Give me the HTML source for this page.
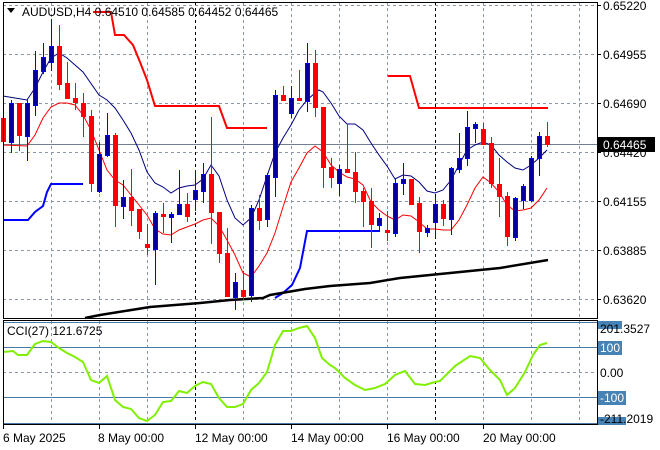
<!DOCTYPE html>
<html><head><meta charset="utf-8"><style>
html,body{margin:0;padding:0;background:#fff;width:660px;height:450px;overflow:hidden}
svg{display:block;font-family:"Liberation Sans",sans-serif}
</style></head><body>
<svg width="660" height="450" viewBox="0 0 660 450" xmlns="http://www.w3.org/2000/svg">
<rect width="660" height="450" fill="#fff"/>
<!-- grid main -->
<g stroke="#8a96a6" stroke-width="1" stroke-dasharray="3,3" fill="none">
<path d="M3 5.5H597M3 54.5H597M3 103.5H597M3 152.5H597M3 201.5H597M3 250.5H597M3 299.5H597"/>
<path d="M51.5 2V318M99.5 2V318M147.5 2V318M243.5 2V318M291.5 2V318M339.5 2V318M387.5 2V318M483.5 2V318M531.5 2V318M579.5 2V318"/>
<path d="M51.5 321V424M99.5 321V424M147.5 321V424M243.5 321V424M291.5 321V424M339.5 321V424M387.5 321V424M483.5 321V424M531.5 321V424M579.5 321V424M3 372.5H597"/>
</g>
<g stroke="#000" stroke-width="1" stroke-dasharray="3,3"><path d="M195.5 2V318M435.5 2V318M195.5 321V424M435.5 321V424"/></g>
<!-- current price line -->
<path d="M3 144.5H597" stroke="#708090" stroke-width="1"/>
<!-- thick lines -->
<polyline fill="none" stroke="#ff0000" stroke-width="2" points="93,12 111,12 115,35 124,35 133,45 140,62 147,80 155,106 219,106 227,128 267,128"/>
<polyline fill="none" stroke="#ff0000" stroke-width="2" points="388,76 410,76 419,108 548,108"/>
<polyline fill="none" stroke="#0000ff" stroke-width="2" points="3,220 28,220 35,212 43,206 47,192 51,184 83,184"/>
<polyline fill="none" stroke="#0000ff" stroke-width="2" points="275,298 283,293 292,285 300,268 307,231 380,231"/>
<polyline fill="none" stroke="#000" stroke-width="2.5" points="85,318 100,315 150,307 200,303 230,300 263,298 270,295 305,289 330,286 370,283 400,278 450,273 500,268 548,260"/>
<!-- MAs -->
<polyline fill="none" stroke="#000080" stroke-width="1" points="3,96 27,100 35,88 43,72 51,58 59,53 67,58 83,72 99,95 107,100 115,108 123,120 131,133 139,150 147,172 155,183 163,187 171,193 179,188 187,186 195,185 203,179 211,165 219,176 227,200 235,218 243,225 251,218 259,200 267,176 275,153 283,138 291,125 299,110 307,100 315,93 319,90 323,92 331,103 339,116 347,124 355,124 363,130 371,143 379,155 387,166 395,179 403,175 411,176 419,182 427,191 435,193 443,190 451,180 459,165 467,150 475,145 483,142 491,145 499,155 507,162 515,168 523,170 531,165 539,158 547,150"/>
<polyline fill="none" stroke="#ff0000" stroke-width="1" points="3,145 27,146 35,135 43,118 51,107 59,103 67,103 75,105 83,115 91,130 99,150 107,170 115,180 123,185 131,195 139,205 147,215 155,229 163,234 171,235 179,230 187,227 195,224 203,220 211,218 219,226 227,240 235,255 243,273 251,277 259,266 267,253 275,233 283,207 291,182 299,168 307,153 315,146 323,152 331,165 339,172 347,177 355,179 363,185 371,202 379,210 387,216 395,220 403,215 411,216 419,222 427,229 435,229 443,230 451,230 459,220 467,205 475,188 483,177 491,183 499,192 507,205 515,211 523,210 531,208 539,200 547,188"/>
<!-- red candles -->
<g fill="#ff0000" stroke="#ff0000">
<path stroke-width="1" fill="none" d="M3.5 118V150M19.5 103V151M59.5 25V90M67.5 62V99M75.5 83V110M83.5 93V137M91.5 110V192M115.5 133V227M131.5 169V226M139.5 209V239M147.5 224V255M163.5 203V233M187.5 193V222M211.5 117V244M219.5 212V263M227.5 228V297M243.5 271V300M259.5 195V230M283.5 86V101M299.5 70V101M315.5 50V117M323.5 107V188M331.5 158V188M347.5 124V173M355.5 152V203M363.5 188V227M371.5 188V248M387.5 211V241M411.5 179V205M419.5 197V253M443.5 200V226M483.5 123V145M491.5 137V188M499.5 158V217M507.5 192V246M547.5 122V147"/>
<g stroke="none">
<rect x="1" y="118" width="5" height="24"/><rect x="17" y="103" width="5" height="33"/><rect x="57" y="46" width="5" height="39"/><rect x="65" y="83" width="5" height="16"/><rect x="73" y="98" width="5" height="5"/><rect x="81" y="103" width="5" height="14"/><rect x="89" y="116" width="5" height="68"/><rect x="113" y="135" width="5" height="71"/><rect x="129" y="197" width="5" height="14"/><rect x="137" y="209" width="5" height="23"/><rect x="145" y="244" width="5" height="4"/><rect x="161" y="214" width="5" height="3"/><rect x="185" y="204" width="5" height="13"/><rect x="209" y="174" width="5" height="39"/><rect x="217" y="212" width="5" height="42"/><rect x="225" y="253" width="5" height="44"/><rect x="241" y="290" width="5" height="7"/><rect x="257" y="208" width="5" height="13"/><rect x="281" y="95" width="5" height="6"/><rect x="297" y="98" width="5" height="3"/><rect x="313" y="63" width="5" height="45"/><rect x="321" y="107" width="5" height="61"/><rect x="329" y="167" width="5" height="11"/><rect x="345" y="169" width="5" height="4"/><rect x="353" y="172" width="5" height="20"/><rect x="361" y="191" width="5" height="11"/><rect x="369" y="201" width="5" height="24"/><rect x="385" y="230" width="5" height="3"/><rect x="409" y="179" width="5" height="26"/><rect x="417" y="203" width="5" height="29"/><rect x="441" y="204" width="5" height="15"/><rect x="481" y="129" width="5" height="16"/><rect x="489" y="143" width="5" height="41"/><rect x="497" y="184" width="5" height="13"/><rect x="505" y="196" width="5" height="41"/><rect x="545" y="136" width="5" height="9"/>
</g></g>
<!-- blue candles -->
<g>
<path stroke="#0000ff" stroke-width="1" fill="none" d="M11.5 100V153M27.5 100V161M35.5 51V116M43.5 43V74M51.5 19V71M99.5 142V193M107.5 113V157M123.5 180V219M155.5 211V285M171.5 212V243M179.5 170V214M195.5 170V211M203.5 163V203M235.5 273V310M251.5 205V302M267.5 173V227M275.5 90V197M291.5 86V118M307.5 43V112M339.5 165V196M379.5 213V232M395.5 178V237M403.5 163V195M427.5 225V237M435.5 197V238M451.5 167V235M459.5 133V173M467.5 111V166M475.5 122V143M515.5 197V241M523.5 184V209M531.5 156V202M539.5 132V176"/>
<g fill="#00009a" stroke="#0000ff" stroke-width="1">
<rect x="9.5" y="103.5" width="4" height="39"/><rect x="25.5" y="103.5" width="4" height="33"/><rect x="33.5" y="70.5" width="4" height="35"/><rect x="41.5" y="57.5" width="4" height="14"/><rect x="49.5" y="46.5" width="4" height="16"/><rect x="97.5" y="154.5" width="4" height="37"/><rect x="105.5" y="135.5" width="4" height="20"/><rect x="121.5" y="197.5" width="4" height="9"/><rect x="153.5" y="213.5" width="4" height="36"/><rect x="169.5" y="214.5" width="4" height="3"/><rect x="177.5" y="204.5" width="4" height="10"/><rect x="193.5" y="190.5" width="4" height="9"/><rect x="201.5" y="174.5" width="4" height="17"/><rect x="233.5" y="282.5" width="4" height="15"/><rect x="249.5" y="208.5" width="4" height="87"/><rect x="265.5" y="175.5" width="4" height="44"/><rect x="273.5" y="95.5" width="4" height="82"/><rect x="289.5" y="98.5" width="4" height="15"/><rect x="305.5" y="63.5" width="4" height="38"/><rect x="337.5" y="169.5" width="4" height="14"/><rect x="377.5" y="218.5" width="4" height="7"/><rect x="393.5" y="183.5" width="4" height="50"/><rect x="401.5" y="179.5" width="4" height="4"/><rect x="425.5" y="228.5" width="4" height="4"/><rect x="433.5" y="204.5" width="4" height="18"/><rect x="449.5" y="168.5" width="4" height="51"/><rect x="457.5" y="158.5" width="4" height="11"/><rect x="465.5" y="127.5" width="4" height="31"/><rect x="473.5" y="124.5" width="4" height="4"/><rect x="513.5" y="198.5" width="4" height="39"/><rect x="521.5" y="186.5" width="4" height="14"/><rect x="529.5" y="158.5" width="4" height="42"/><rect x="537.5" y="136.5" width="4" height="22"/>
</g></g>
<!-- CCI levels -->
<g stroke="#4a7aa8" stroke-width="1"><path d="M3 322.5H597M3 347.5H597M3 397.5H597M3 423.5H597"/></g>
<polyline fill="none" stroke="#80f000" stroke-width="2" points="3,352 13,351 18,355 27,355 35,344 43,341 51,342 59,348 67,353 75,357 83,362 91,380 99,383 107,376 115,400 123,407 131,409 139,418 147,421 155,415 163,402 171,401 179,391 187,393 195,386 203,382 211,384 219,398 227,407 235,407 243,404 251,390 259,383 267,372 275,345 283,331 291,331 299,328 307,326 315,338 322,358 330,365 335,368 345,378 355,385 365,390 375,388 385,384 395,375 405,371 415,384 425,385 435,382 440,381 455,366 470,356 480,358 490,370 500,380 507,395 515,388 525,372 533,355 540,345 547,343"/>
<!-- frames -->
<rect x="3.5" y="2.5" width="594" height="316" fill="none" stroke="#000"/>
<rect x="3.5" y="320.5" width="594" height="104" fill="none" stroke="#000"/>
<!-- title -->
<path d="M7 8L15 8L11 13Z" fill="#000"/>
<text x="22" y="16" font-size="12" fill="#000">AUDUSD,H4  0.64510 0.64585 0.64452 0.64465</text>
<text x="7" y="335" font-size="12" fill="#000">CCI(27) 121.6725</text>
<!-- right axis -->
<g font-size="12" fill="#000">
<path d="M597 5.5h4M597 54.5h4M597 103.5h4M597 152.5h4M597 201.5h4M597 250.5h4M597 299.5h4" stroke="#000"/>
<text x="603" y="10">0.65220</text><text x="603" y="59">0.64955</text><text x="603" y="108">0.64690</text><text x="603" y="157">0.64420</text><text x="603" y="206">0.64155</text><text x="603" y="255">0.63885</text><text x="603" y="304">0.63620</text>
<rect x="598" y="137" width="57" height="15" fill="#000"/>
<text x="603" y="149" fill="#fff">0.64465</text>
<rect x="598" y="321" width="24" height="8" fill="#4682b4"/>
<text x="600" y="333">201.3527</text>
<rect x="598" y="341" width="24" height="14" fill="#4682b4"/>
<text x="600" y="352" fill="#fff">100</text>
<text x="600" y="377">0.00</text>
<rect x="598" y="391" width="28" height="14" fill="#4682b4"/>
<text x="600" y="402" fill="#fff">-100</text>
<rect x="598" y="417" width="28" height="8" fill="#4682b4"/>
<text x="600" y="423">-211.2019</text>
</g>
<!-- dates -->
<g font-size="12" fill="#000">
<path d="M3.5 425v4M99.5 425v4M195.5 425v4M291.5 425v4M387.5 425v4M483.5 425v4" stroke="#000"/>
<text x="3" y="442">6 May 2025</text><text x="98" y="442">8 May 00:00</text><text x="195" y="442">12 May 00:00</text><text x="291" y="442">14 May 00:00</text><text x="387" y="442">16 May 00:00</text><text x="483" y="442">20 May 00:00</text>
</g>
</svg>
</body></html>
